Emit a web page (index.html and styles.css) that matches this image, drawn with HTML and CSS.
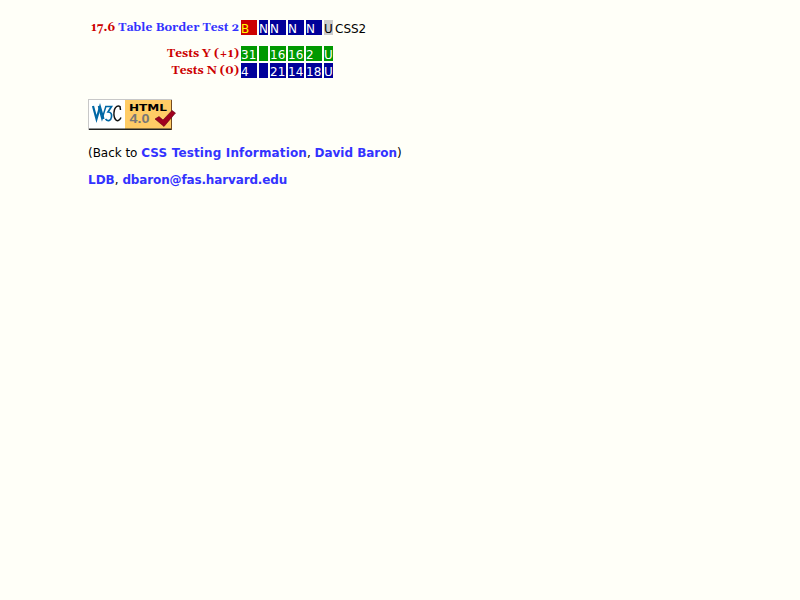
FILE: index.html
```
<!DOCTYPE html>
<html lang="en">
<head>
<meta charset="utf-8">
<title>Table Border Test 2</title>
<link rel="stylesheet" href="styles.css">
</head>
<body>
<main>
<div class="results">
  <div class="row first"><h1 class="label"><span class="num">17.6</span> <a class="name">Table Border Test 2</a></h1><span class="cell b">B</span><span class="cell n">N</span><span class="cell n">N</span><span class="cell n">N</span><span class="cell n">N</span><span class="cell u">U</span><span class="note">CSS2</span></div>
  <div class="row"><h2 class="label"><span class="yes">Tests Y (+1)</span></h2><span class="cell y">31</span><span class="cell y"></span><span class="cell y">16</span><span class="cell y">16</span><span class="cell y">2</span><span class="cell y">U</span></div>
  <div class="row"><h2 class="label"><span class="no">Tests N (0)</span></h2><span class="cell n">4</span><span class="cell n"></span><span class="cell n">21</span><span class="cell n">14</span><span class="cell n">18</span><span class="cell n">U</span></div>
</div>
<svg class="badge" width="88" height="31" viewBox="0 0 88 31" role="img">
  <path fill="#c8c8c8" d="M0 0h84v31H0z"/>
  <path fill="#fff" d="M1 1h36v29H1z"/>
  <path fill="#fc6" d="M37 1h46v29H37z"/>
  <path fill="#222" d="M1 29.500h83v1.500H1z"/>
  <path fill="#754c20" d="M83 1h1v30h-1z"/>
  <g fill="none" stroke="#0067a5">
    <path stroke-width="2.200" d="M5 7l3.500 13 3.500-12 3.500 12"/>
    <path stroke-width="1.500" d="M10.500 7l3.500 13 4-13"/>
    <path stroke-width="1.700" d="M17.500 7.500h6l-3.500 5.500c3 0 4 2 3.500 5-.5 3.500-3.500 5-6 2"/>
  </g>
  <path fill="none" stroke="#111" stroke-width="1.500" d="M32.500 11l-.5-3.500c-2-1.500-4.500 0-5.500 3-1 4-.5 8 1 10 1.500 2 4 1.500 5.500-2"/>
  <text class="html" x="41" y="12" textLength="38" lengthAdjust="spacingAndGlyphs">HTML</text>
  <text class="version" x="41.500" y="24" textLength="20" lengthAdjust="spacingAndGlyphs">4.0</text>
  <path fill="#a0001e" stroke="#600018" stroke-width=".6" d="M67 20l4-2.500 4 3.500 9-9.500 3.500 2.500-11.500 13.500z"/>
</svg>
<p class="back">(Back to <a class="info">CSS Testing Information</a>, <a class="david">David Baron</a>)</p>
<p class="contact"><a>LDB</a>, <a class="mail">dbaron@fas.harvard.edu</a></p>
</main>
</body>
</html>
```
FILE: styles.css
```
body {
  margin: 0;
  background: #fffff8;
  color: #000;
  font: 12px/15px Verdana, "DejaVu Sans", sans-serif;
}
main { padding: 20px 0 0 88px; }
.row {
  display: grid;
  grid-template-columns: 151px 16px 9px 16px 16px 16px 9px auto;
  column-gap: 2px;
  height: 15px;
  margin-bottom: 2px;
  white-space: nowrap;
}
.first { margin-bottom: 11px; }
.label {
  margin: 0;
  color: #c00;
  font: bold 12px/15px Georgia, Gelasio, "DejaVu Serif", serif;
  font-variant-numeric: oldstyle-nums;
  font-kerning: none;
  text-align: right;
}
.cell { color: #fff; line-height: 18px; height: 15px; }
.b { background: #c00; color: #ff0; }
.n { background: #009; }
.y { background: #090; }
.u { background: #ccc; color: #000; }
.note { line-height: 18px; }
.badge { display: block; margin-top: 21px; }
.html { font: bold 9px "DejaVu Sans", sans-serif; }
.version { font: bold 12px "Liberation Sans", sans-serif; fill: #777; }
a { color: #33f; font-weight: bold; }
p { margin: 16px 0 0; white-space: nowrap; }
.back { letter-spacing: -.04px; }
.info { letter-spacing: .14px; }
.david { letter-spacing: -.03px; }
.mail { letter-spacing: -.14px; }
.contact { margin-top: 12px; }
```
